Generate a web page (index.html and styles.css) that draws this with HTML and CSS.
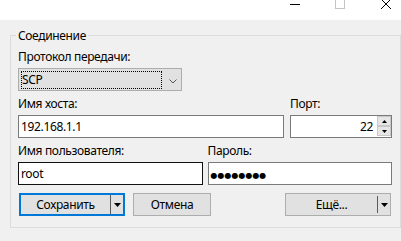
FILE: index.html
```html
<!DOCTYPE html>
<html lang="ru">
<head>
<meta charset="utf-8">
<title>Соединение</title>
<link rel="stylesheet" href="styles.css">
</head>
<body>
<div class="titlebar">
  <svg class="cap cap-min" width="10" height="20" viewBox="0 0 10 20"><path d="M0 4.5H10" stroke="#000" stroke-width="1"/></svg>
  <svg class="cap cap-max" width="10" height="20" viewBox="0 0 10 20"><rect x="0.5" y="-2.5" width="9" height="11" fill="none" stroke="#c4c4c4" stroke-width="1"/></svg>
  <svg class="cap cap-close" width="10" height="20" viewBox="0 0 10 20"><path d="M0 -1L10 9M10 -1L0 9" stroke="#000" stroke-width="1"/></svg>
</div>
<div class="group">
  <div class="legend">Соединение</div>
  <div class="row">
    <div class="label">Протокол передачи:</div>
    <div class="combo">
      <div class="combo-focus">SCP</div>
      <svg class="chevron" width="8" height="5" viewBox="0 0 8 5"><path d="M0.5 0.5L4 4L7.5 0.5" fill="none" stroke="#555" stroke-width="1"/></svg>
    </div>
  </div>
  <div class="row host-row">
    <div class="field">
      <div class="label">Имя хоста:</div>
      <div class="input">192.168.1.1</div>
    </div>
    <div class="field">
      <div class="label">Порт:</div>
      <div class="input port">
        <span class="num">22</span>
        <div class="spinner">
          <div class="spin-btn"><svg width="5" height="3" viewBox="0 0 5 3"><path d="M2.5 0L5 3H0Z" fill="#000"/></svg></div>
          <div class="spin-btn"><svg width="5" height="3" viewBox="0 0 5 3"><path d="M0 0H5L2.5 3Z" fill="#000"/></svg></div>
        </div>
      </div>
    </div>
  </div>
  <div class="row user-row">
    <div class="field">
      <div class="label">Имя пользователя:</div>
      <div class="input hover">root</div>
    </div>
    <div class="field">
      <div class="label">Пароль:</div>
      <div class="input"><span class="dots">●●●●●●●●</span></div>
    </div>
  </div>
  <div class="buttons">
    <div class="btn default save">
      <span class="btn-label">Сохранить</span>
      <span class="btn-drop"><svg width="7" height="4" viewBox="0 0 7 4"><path d="M0 0H7L3.5 4Z" fill="#000"/></svg></span>
    </div>
    <div class="btn cancel"><span class="btn-label">Отмена</span></div>
    <div class="btn more">
      <span class="btn-label">Ещё...</span>
      <span class="btn-drop"><svg width="7" height="4" viewBox="0 0 7 4"><path d="M0 0H7L3.5 4Z" fill="#000"/></svg></span>
    </div>
  </div>
</div>
</body>
</html>
```
FILE: styles.css
```css
html, body {
  margin: 0;
  padding: 0;
}
body {
  width: 401px;
  height: 241px;
  overflow: hidden;
  background: #f0f0f0;
  color: #000;
  font-family: "Noto Sans", "Liberation Sans", sans-serif;
  font-size: 12px;
  letter-spacing: -0.35px;
}
.titlebar {
  height: 20px;
  background: #fff;
  display: flex;
  justify-content: flex-end;
  align-items: flex-start;
  padding-right: 10px;
}
.cap {
  display: block;
  overflow: hidden;
}
.cap-min { margin-right: 35px; }
.cap-max { margin-right: 36px; }

.group {
  margin: 15px 0 0 10px;
  border: 1px solid #dcdcdc;
  padding: 0 8px 11px 7px;
}
.legend {
  margin: -8px 0 6px -2px;
  padding: 0 2px;
  width: fit-content;
  background: #f0f0f0;
  line-height: 15px;
}
.row + .row {
  margin-top: 5px;
}
.label {
  line-height: 15px;
  margin-bottom: 4px;
  white-space: nowrap;
}
.combo {
  width: 164px;
  height: 23px;
  box-sizing: border-box;
  border: 1px solid #adadad;
  background: #e1e1e1;
  padding: 2px;
  display: flex;
  align-items: flex-start;
}
.combo-focus {
  width: 141px;
  height: 18px;
  box-sizing: border-box;
  border: 1px dotted #000;
  line-height: 16px;
  padding-left: 0;
}
.chevron {
  display: block;
  margin: 8px 0 0 7px;
}
.host-row {
  display: grid;
  grid-template-columns: 1fr 102px;
  column-gap: 6px;
}
.user-row {
  display: grid;
  grid-template-columns: 1fr 1fr;
  column-gap: 5px;
}
.input {
  height: 23px;
  box-sizing: border-box;
  border: 1px solid #7a7a7a;
  background: #fff;
  padding: 0 2px;
  line-height: 21px;
  white-space: nowrap;
}
.input.hover {
  border-color: #111;
}
.input.port {
  display: flex;
  justify-content: flex-end;
  align-items: flex-start;
  padding: 0;
}
.num {
  margin-right: 4px;
}
.spinner {
  display: flex;
  flex-direction: column;
  width: 14px;
}
.spin-btn {
  height: 10px;
  box-sizing: border-box;
  border: 1px solid #c8c8c8;
  background: #e6e6e6;
  display: flex;
  align-items: center;
  justify-content: center;
}
.spin-btn svg { display: block; }
.dots {
  font-family: "DejaVu Sans", sans-serif;
  font-size: 8px;
  letter-spacing: 0;
}
.buttons {
  display: flex;
  margin-top: 8px;
}
.btn {
  height: 23px;
  box-sizing: border-box;
  border: 1px solid #adadad;
  background: #e1e1e1;
  display: flex;
  align-items: stretch;
}
.btn.default {
  border: 2px solid #0078d7;
}
.save {
  width: 106px;
  margin-left: 1px;
}
.cancel {
  width: 78px;
  margin-left: 8px;
}
.more {
  width: 106px;
  margin-left: auto;
  margin-right: 1px;
}
.btn-label {
  flex: 1;
  display: flex;
  align-items: center;
  justify-content: center;
  white-space: nowrap;
}
.btn-drop {
  width: 13px;
  box-sizing: border-box;
  border-left: 1px solid #5a5a5a;
  display: flex;
  align-items: center;
  justify-content: center;
}
.more .btn-drop {
  margin: 2px 0;
}
.btn-drop svg { display: block; }
```
